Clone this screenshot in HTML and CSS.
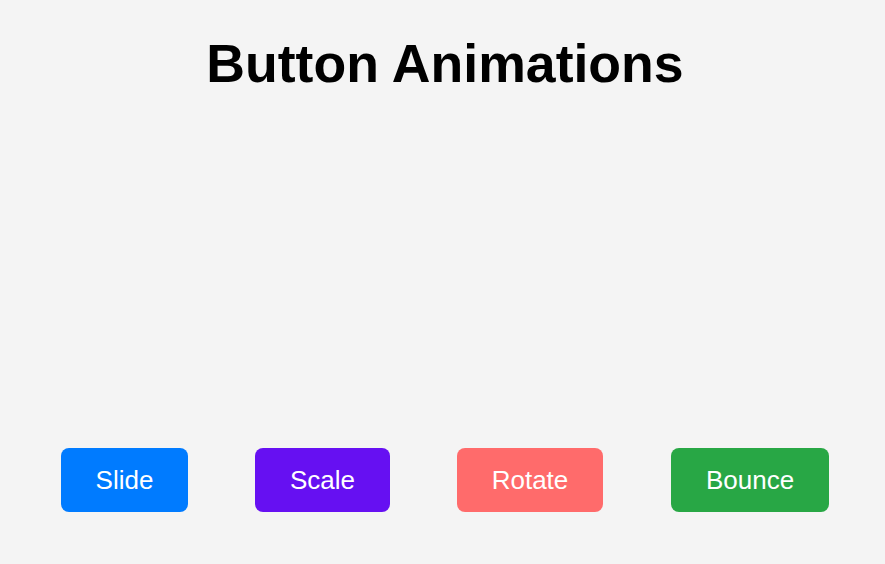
FILE: index.html
```html
<!DOCTYPE html>
<html lang="en">
<head>
<meta charset="utf-8">
<title>Button Animations</title>
<link rel="stylesheet" href="styles.css">
</head>
<body>
  <h1 class="title">Button Animations</h1>
  <div class="buttons">
    <button class="btn btn-slide">Slide</button>
    <button class="btn btn-scale">Scale</button>
    <button class="btn btn-rotate">Rotate</button>
    <button class="btn btn-bounce">Bounce</button>
  </div>
</body>
</html>
```
FILE: styles.css
```css
html, body {
  margin: 0;
  padding: 0;
}
body {
  background: #f4f4f4;
  font-family: "Liberation Sans", Arial, sans-serif;
  width: 885px;
  height: 564px;
  overflow: hidden;
}
.title {
  margin: 32px 0 0;
  font-size: 53.6px;
  line-height: 62px;
  font-weight: bold;
  text-align: center;
  color: #000;
  padding-left: 5px;
}
.buttons {
  display: flex;
  gap: 67px;
  padding-left: 61px;
  margin-top: 354px;
}
.btn {
  border: none;
  border-radius: 8px;
  color: #fff;
  font-family: "Liberation Sans", Arial, sans-serif;
  font-size: 26px;
  line-height: 30px;
  height: 64px;
  padding: 0;
  text-align: center;
  cursor: pointer;
}
.btn-slide { background: #007bff; width: 127px; }
.btn-scale { background: #6610f2; width: 135px; }
.btn-rotate { background: #ff6b6b; width: 146px; }
.btn-bounce { background: #28a745; width: 158px; margin-left: 1px; }
```
